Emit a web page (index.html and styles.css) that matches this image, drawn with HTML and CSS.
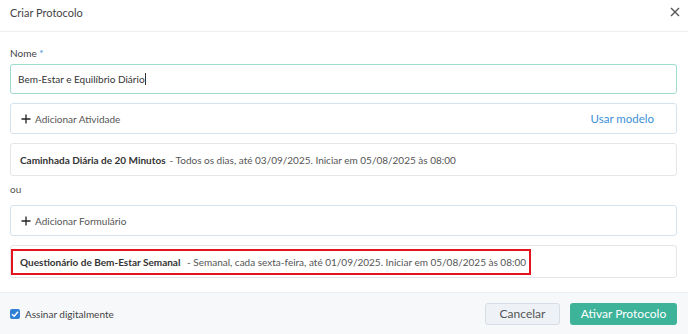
FILE: index.html
```html
<!DOCTYPE html>
<html lang="pt-BR">
<head>
  <meta charset="UTF-8" />
  <meta name="viewport" content="width=device-width,initial-scale=1.0" />
  <title>Criar Protocolo</title>
  <link rel="stylesheet" href="styles.css">
</head>
<body>

  <div class="modal">

    <div class="modal_header">
      <span class="modal_title">Criar Protocolo</span>
      <button class="close_btn" aria-label="Fechar">
        <svg width="10" height="10" viewBox="0 0 10 10">
          <path d="M1 1 L9 9 M9 1 L1 9" stroke="#555" stroke-width="1.4" fill="none"></path>
        </svg>
      </button>
    </div>

    <div class="modal_body">
      <label class="field_label">Nome <span class="required">*</span></label>
      <div class="text_input">Bem-Estar e Equilíbrio Diário<span class="caret"></span></div>

      <div class="add_box">
        <span class="add_left">
          <svg class="plus" width="10" height="10" viewBox="0 0 10 10">
            <path d="M5 0.5 V9.5 M0.5 5 H9.5" stroke="#222" stroke-width="1.3" fill="none"></path>
          </svg>
          Adicionar Atividade
        </span>
        <a class="link_btn">Usar modelo</a>
      </div>

      <div class="item_box">
        <span class="item_name">Caminhada Diária de 20 Minutos</span>
        <span class="item_desc">- Todos os dias, até 03/09/2025. Iniciar em 05/08/2025 às 08:00</span>
      </div>

      <p class="or_text">ou</p>

      <div class="add_box">
        <span class="add_left">
          <svg class="plus" width="10" height="10" viewBox="0 0 10 10">
            <path d="M5 0.5 V9.5 M0.5 5 H9.5" stroke="#222" stroke-width="1.3" fill="none"></path>
          </svg>
          Adicionar Formulário
        </span>
      </div>

      <div class="item_box">
        <span class="highlight">
          <span class="item_name">Questionário de Bem-Estar Semanal</span>
          <span class="item_desc">- Semanal, cada sexta-feira, até 01/09/2025. Iniciar em 05/08/2025 às 08:00</span>
        </span>
      </div>
    </div>

    <div class="modal_footer">
      <label class="check_label">
        <span class="checkbox">
          <svg width="10" height="10" viewBox="0 0 10 10">
            <path d="M2 5.2 L4.2 7.3 L8 2.8" stroke="white" stroke-width="1.4" fill="none"></path>
          </svg>
        </span>
        Assinar digitalmente
      </label>
      <div class="footer_buttons">
        <button class="btn btn_cancel">Cancelar</button>
        <button class="btn btn_primary">Ativar Protocolo</button>
      </div>
    </div>

  </div>

</body>
</html>
```

FILE: styles.css
```css
body {
  margin: 0;
  padding: 0;
  background: white;
  font-family: Lato, "Open Sans", sans-serif;
  color: #333;
}

.modal {
  width: 688px;
  height: 334px;
  display: flex;
  flex-direction: column;
}

/* ========================== */
/* ヘッダー */
/* ========================== */

.modal_header {
  height: 32px;
  box-sizing: border-box;
  border-bottom: 1px solid #eceef0;
  display: flex;
  justify-content: space-between;
  align-items: center;
  padding: 0 8px 7px 10px;
}

.modal_title {
  font-size: 11px;
  color: #444;
}

.close_btn {
  background: none;
  border: none;
  padding: 0;
  cursor: pointer;
  display: flex;
}

/* ========================== */
/* 本文 */
/* ========================== */

.modal_body {
  flex: 1;
  padding: 15px 11px 0 10px;
  font-size: 10px;
}

.field_label {
  display: block;
  color: #444;
  margin-bottom: 5px;
}

.required {
  color: #3a8fd8;
}

.text_input {
  height: 30px;
  box-sizing: border-box;
  border: 1px solid #9fdccd;
  border-radius: 3px;
  padding: 0 7px;
  display: flex;
  align-items: center;
  color: #333;
  margin-bottom: 9px;
}

.caret {
  display: inline-block;
  width: 1px;
  height: 12px;
  background: #333;
}

.add_box {
  height: 31px;
  box-sizing: border-box;
  border: 1px solid #d5e3ef;
  border-radius: 3px;
  padding: 0 22px 0 10px;
  display: flex;
  justify-content: space-between;
  align-items: center;
  margin-bottom: 9px;
}

.add_left {
  display: flex;
  align-items: center;
  gap: 4px;
  color: #555;
}

.link_btn {
  color: #3d8fd6;
  font-size: 11.5px;
  cursor: pointer;
}

.item_box {
  height: 33px;
  box-sizing: border-box;
  border: 1px solid #e4e6e9;
  border-radius: 3px;
  padding: 0 9px;
  display: flex;
  align-items: center;
}

.item_name {
  font-weight: bold;
  color: #333;
  margin-right: 4px;
}

.item_desc {
  color: #555;
}

.highlight {
  border: 2px solid #e3141e;
  padding: 5px 3px 5px 7px;
  margin-left: -9px;
}

.or_text {
  margin: 7px 0 10px 0;
  color: #555;
}

/* ========================== */
/* フッター */
/* ========================== */

.modal_footer {
  height: 41px;
  background: #f7f8fa;
  border-top: 1px solid #eceef0;
  display: flex;
  justify-content: space-between;
  align-items: center;
  padding: 0 11px 0 10px;
}

.check_label {
  display: flex;
  align-items: center;
  gap: 5px;
  font-size: 10px;
  color: #444;
}

.checkbox {
  width: 10px;
  height: 10px;
  background: #2f7fd4;
  border-radius: 2px;
  display: flex;
}

.footer_buttons {
  display: flex;
  gap: 10px;
}

.btn {
  height: 22px;
  border-radius: 3px;
  font-family: inherit;
  font-size: 12px;
  cursor: pointer;
}

.btn_cancel {
  width: 75px;
  background: #eef1f5;
  border: 1px solid #d6dde5;
  color: #555;
}

.btn_primary {
  width: 107px;
  background: #3db39a;
  border: none;
  color: white;
}
```
